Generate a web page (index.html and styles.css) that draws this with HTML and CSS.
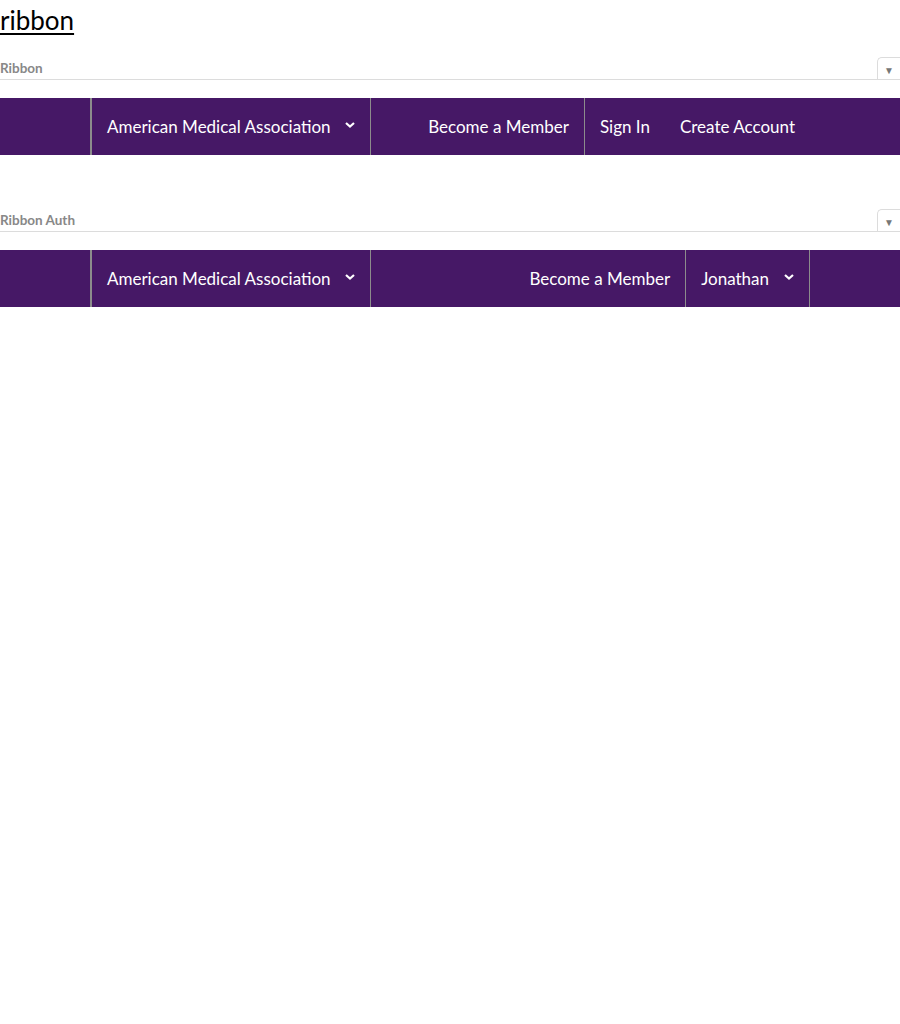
FILE: index.html
```html
<!DOCTYPE html>
<html lang="en">
<head>
<meta charset="utf-8">
<title>ribbon</title>
<link rel="stylesheet" href="styles.css">
</head>
<body>
<h1 class="page-title"><a href="#">ribbon</a></h1>

<section class="demo">
  <div class="demo-head">
    <span class="demo-label">Ribbon</span>
    <span class="demo-toggle">&#9660;</span>
  </div>
  <nav class="ribbon">
    <div class="ribbon-inner">
      <div class="ribbon-item ribbon-brand">
        <span>American Medical Association</span>
        <svg class="chev" width="10" height="6" viewBox="0 0 10 6"><path d="M1 1 L5 4.5 L9 1" fill="none" stroke="#fff" stroke-width="2.2"/></svg>
      </div>
      <div class="ribbon-right">
        <a class="ribbon-item sep" href="#">Become a Member</a>
        <a class="ribbon-item" href="#">Sign In</a>
        <a class="ribbon-item" href="#">Create Account</a>
      </div>
    </div>
  </nav>
</section>

<section class="demo">
  <div class="demo-head">
    <span class="demo-label">Ribbon Auth</span>
    <span class="demo-toggle">&#9660;</span>
  </div>
  <nav class="ribbon">
    <div class="ribbon-inner">
      <div class="ribbon-item ribbon-brand">
        <span>American Medical Association</span>
        <svg class="chev" width="10" height="6" viewBox="0 0 10 6"><path d="M1 1 L5 4.5 L9 1" fill="none" stroke="#fff" stroke-width="2.2"/></svg>
      </div>
      <div class="ribbon-right">
        <a class="ribbon-item sep" href="#">Become a Member</a>
        <a class="ribbon-item sep user" href="#">
          <span>Jonathan</span>
          <svg class="chev" width="10" height="6" viewBox="0 0 10 6"><path d="M1 1 L5 4.5 L9 1" fill="none" stroke="#fff" stroke-width="2.2"/></svg>
        </a>
      </div>
    </div>
  </nav>
</section>
</body>
</html>
```

FILE: styles.css
```css
html, body {
  margin: 0;
  padding: 0;
  background: #fff;
}

body {
  font-family: Lato, "Open Sans", sans-serif;
  color: #000;
}

.page-title {
  margin: 0 0 17px;
  font-size: 26px;
  font-weight: normal;
  line-height: 40px;
}

.page-title a {
  color: #000;
  text-decoration: underline;
  text-decoration-thickness: 2px;
  text-underline-offset: 3px;
}

.demo {
  margin-bottom: 54px;
}

.demo-head {
  display: flex;
  justify-content: space-between;
  align-items: flex-end;
  height: 23px;
  box-sizing: border-box;
  border-bottom: 1px solid #dcdcdc;
  margin-bottom: 18px;
}

.demo-label {
  font-size: 13.5px;
  font-weight: bold;
  color: #888;
  line-height: 22px;
  padding-top: 1px;
}

.demo-toggle {
  width: 23px;
  height: 22px;
  box-sizing: border-box;
  border: 1px solid #dcdcdc;
  border-bottom: none;
  border-right: none;
  border-radius: 5px 0 0 0;
  display: flex;
  align-items: center;
  justify-content: center;
  font-size: 10px;
  color: #777;
  padding-top: 2px;
}

.ribbon {
  background: #461866;
  height: 57px;
}

.ribbon-inner {
  width: 720px;
  height: 100%;
  margin: 0 auto;
  display: flex;
}

.ribbon-item {
  display: flex;
  align-items: center;
  padding: 0 15px;
  color: #fff;
  text-decoration: none;
  font-size: 17px;
  white-space: nowrap;
}

.ribbon-brand {
  border-left: 2px solid #8c8c8c;
  border-right: 1px solid #8c8c8c;
  gap: 14px;
}

.ribbon-right {
  margin-left: auto;
  display: flex;
}

.sep {
  border-right: 1px solid #8c8c8c;
}

.user {
  gap: 15px;
}

.chev {
  display: block;
  margin-top: -4px;
}
```
